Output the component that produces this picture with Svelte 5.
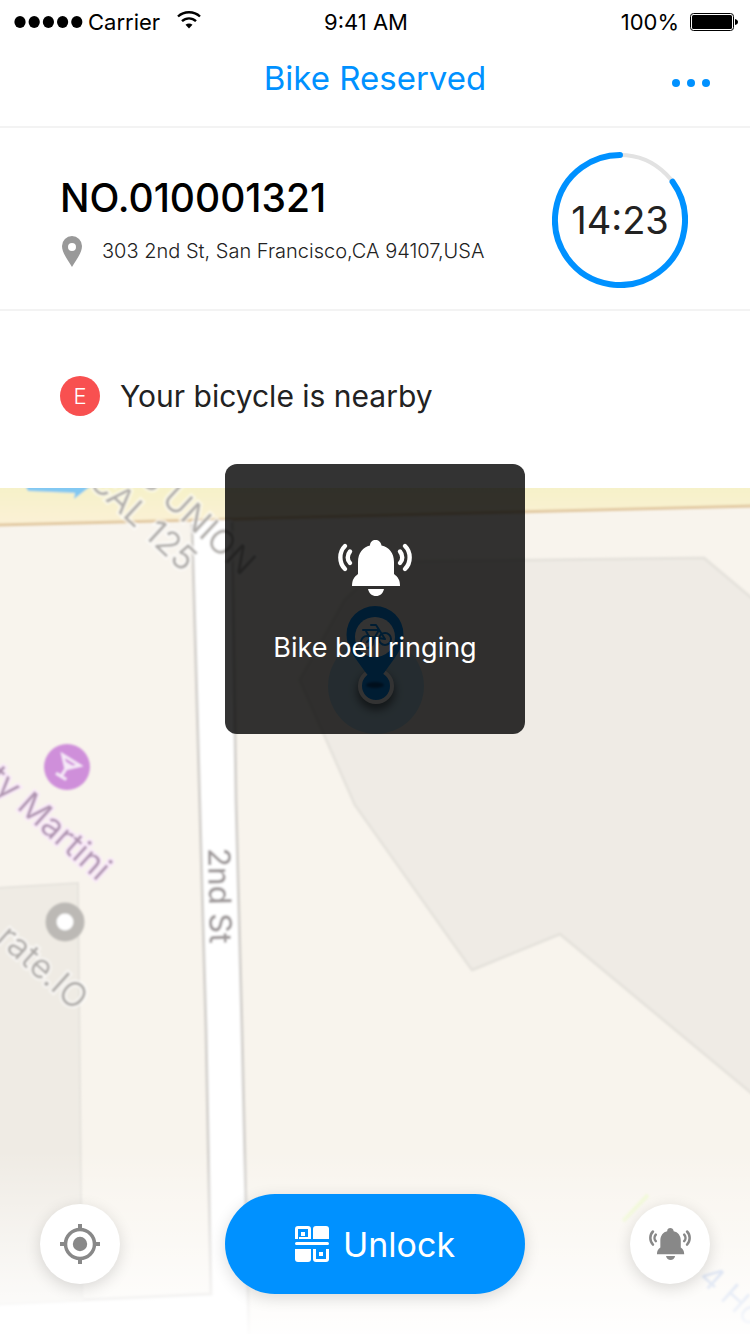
<script>
  const bikeNumber = 'NO.010001321';
  const address = '303 2nd St, San Francisco,CA 94107,USA';
  const timeLeft = '14:23';
  const remaining = 85;
</script>

{#snippet bell()}
  <svg class="bell" viewBox="0 0 74 56" aria-hidden="true">
    <path fill="currentColor" d="M14 46C14 40 16 37 20 34V22C20 13 25 7 32 5.500C32 2 34.500 0 37.500 0S43 2 43.500 5.500C51 7 56 13 56 22V34C60 37 62 40 62 46Z" />
    <path fill="currentColor" d="M30 49H46C45 53.500 42 56 38 56S31 53.500 30 49Z" />
    <g fill="none" stroke="currentColor" stroke-width="4.400" stroke-linecap="round">
      <path d="M7 6C.800 12 .800 23 7 29M12 11.500C9 15 9 20 12 23" />
      <path d="M67 6C73.200 12 73.200 23 67 29M62 11.500C65 15 65 20 62 23" />
    </g>
  </svg>
{/snippet}

<div class="screen">
  <div class="statusbar">
    <div class="carrier">
      <svg width="69" height="14" viewBox="0 0 69 14" aria-hidden="true">
        {#each [0, 1, 2, 3, 4] as i}
          <ellipse cx={6 + i * 14.2} cy="7" rx="5.600" ry="6" />
        {/each}
      </svg>
      <span>Carrier</span>
      <svg class="wifi" width="24" height="18" viewBox="0 0 24 18" aria-hidden="true">
        <g fill="none" stroke="#000" stroke-width="2.400">
          <path d="M1 5.500C7 -.200 17 -.200 23 5.500" />
          <path d="M5 10.200C9 6.400 15 6.400 19 10.200" />
        </g>
        <path d="M8.500 13.800C10.500 12 13.500 12 15.500 13.800L12 17.500Z" />
      </svg>
    </div>
    <span class="clock">9:41 AM</span>
    <div class="power">
      <span>100%</span>
      <svg width="48" height="18" viewBox="0 0 48 18" aria-hidden="true">
        <rect x=".500" y=".500" width="43" height="17" rx="3" fill="none" stroke="#000" />
        <rect x="2" y="2" width="40" height="14" rx="1.500" />
        <path d="M45 6C47 6.500 48 7.500 48 9S47 11.500 45 12Z" />
      </svg>
    </div>
  </div>

  <header>
    <h1>Bike Reserved</h1>
    <button class="more" aria-label="More">
      <i></i><i></i><i></i>
    </button>
  </header>

  <section class="info">
    <div class="details">
      <h2>{bikeNumber}</h2>
      <p class="address">
        <svg width="20" height="31" viewBox="0 0 20 31" aria-hidden="true">
          <path fill="#999" fill-rule="evenodd" d="M10 0A10 10 0 0 1 20 10C20 17 14 24 10 31C6 24 0 17 0 10A10 10 0 0 1 10 0ZM10 7A4 4 0 1 0 10 15A4 4 0 1 0 10 7Z" />
        </svg>
        <span>{address}</span>
      </p>
    </div>
    <div class="timer">
      <svg viewBox="0 0 136 136" aria-hidden="true">
        <circle cx="68" cy="68" r="65" fill="none" stroke="#e2e2e2" stroke-width="4" />
        <circle cx="68" cy="68" r="65" fill="none" stroke="#0091ff" stroke-width="6" stroke-linecap="round" pathLength="100" stroke-dasharray="{remaining} {100 - remaining}" transform="rotate({-90 + (100 - remaining) * 3.6} 68 68)" />
      </svg>
      <span>{timeLeft}</span>
    </div>
  </section>

  <section class="notice">
    <span class="badge">E</span>
    <p>Your bicycle is nearby</p>
  </section>

  <main>
    <svg class="map" viewBox="0 488 750 846" preserveAspectRatio="xMidYMin slice" aria-hidden="true">
      <defs>
        <linearGradient id="fade" x1="0" y1="0" x2="0" y2="1">
          <stop offset="0" stop-color="#fff" stop-opacity="0" />
          <stop offset=".800" stop-color="#fff" stop-opacity=".750" />
          <stop offset="1" stop-color="#fff" stop-opacity=".950" />
        </linearGradient>
        <linearGradient id="avenue" x1="0" y1="0" x2="0" y2="1">
          <stop offset="0" stop-color="#f5f2c6" />
          <stop offset="1" stop-color="#fbf1d6" />
        </linearGradient>
        <filter id="soft" x="-20%" y="-20%" width="140%" height="140%"><feGaussianBlur stdDeviation=".800" /></filter>
        <filter id="shadow" x="-50%" y="-50%" width="200%" height="200%"><feGaussianBlur stdDeviation="4" /></filter>
      </defs>
      <rect y="488" width="750" height="846" fill="#f8f4ed" />
      <g filter="url(#soft)">
        <path d="M-5 480H755V506L-5 525Z" fill="url(#avenue)" />
        <path d="M-5 525L755 506" fill="none" stroke="#e2c9a2" stroke-width="3" />
        <path d="M192 521L232 520L236 800L242 1030L249 1340H-5V1304L211 1294L206 1030L198 740Z" fill="#fff" />
        <path d="M192 524L193 560L198 740L206 1030L211 1294L-5 1304M232 522L236 800L242 1030L249 1340" fill="none" stroke="#d6d3cf" stroke-width="3" />
        <path d="M-5 888L78 883L82 1300L-5 1304Z" fill="#efebe4" stroke="#e6e3dd" stroke-width="2" />
        <path d="M385 562L704 558L755 601V1096L560 934L472 970L355 805L300 680L345 600Z" fill="#efebe5" stroke="#e6e3dd" stroke-width="3" stroke-linejoin="round" />
        <path d="M25 485H92L74 499L75 493L28 491Z" fill="#82c8f2" />
        <g fill="#b1aeab" font-size="34" stroke="#fff" stroke-opacity=".600" stroke-width="4" paint-order="stroke">
          <text text-anchor="end" transform="translate(183 573) rotate(43)">CAL 125</text>
          <text text-anchor="end" transform="translate(242 577) rotate(43)">S UNION</text>
          <text text-anchor="end" transform="translate(75 1012) rotate(42)">rate.IO</text>
        </g>
        <text fill="#a09b9c" font-size="31" font-weight="500" transform="translate(208 848) rotate(89)">2nd St</text>
        <text fill="#af94b0" font-size="34" stroke="#faeafa" stroke-width="4" paint-order="stroke" text-anchor="end" transform="translate(98 882) rotate(42)">ty Martini</text>
        <circle cx="67" cy="767" r="23" fill="#cf8fda" />
        <g transform="translate(67 767) rotate(32)" fill="none" stroke="#f6e9f8" stroke-width="3">
          <path d="M-10 -8H10L0 2ZM0 2V11M-6 11H6" />
          <path d="M-6 -4H6L0 2Z" fill="#f6e9f8" stroke="none" />
        </g>
        <circle cx="65" cy="922" r="14" fill="#fff" stroke="#bcb9b5" stroke-width="11" />
        <path d="M623 1221L648 1195" stroke="#eef7cf" stroke-width="4" />
        <text fill="#a9bce0" font-size="32" transform="translate(697 1279) rotate(42)">4 Ho</text>
      </g>
      <circle cx="376" cy="686" r="48" fill="#b9dced" />
      <circle cx="376" cy="691" r="19" fill="#000" opacity=".500" filter="url(#shadow)" />
      <circle cx="376" cy="686" r="16" fill="#0091ff" stroke="#fff" stroke-width="4" />
      <path d="M375 606A28.500 28.500 0 0 1 403.500 634.500C403.500 648 396 656 384 673Q375 685 366 673C354 656 346.500 648 346.500 634.500A28.500 28.500 0 0 1 375 606Z" fill="#0091ff" />
      <ellipse cx="375" cy="685" rx="9" ry="3" fill="#004a8c" filter="url(#soft)" />
      <circle cx="375" cy="637" r="20" fill="#fff" />
      <g fill="none" stroke="#0091ff" stroke-width="2" stroke-linecap="round" stroke-linejoin="round">
        <circle cx="367" cy="642" r="6" /><circle cx="385" cy="639" r="6" />
        <path d="M367 642L372 637L385 639L376 625H371M363 630H369M366 631L372 642L379 630H366" />
      </g>
      <rect y="1150" width="750" height="184" fill="url(#fade)" />
    </svg>

    <div class="toast" role="status">
      {@render bell()}
      <p>Bike bell ringing</p>
    </div>

    <div class="controls">
      <button class="round" aria-label="Locate me">
        <svg width="40" height="40" viewBox="0 0 40 40" aria-hidden="true">
          <circle cx="20" cy="20" r="14.500" fill="none" stroke="#888" stroke-width="3.500" />
          <circle cx="20" cy="20" r="7.200" fill="#888" />
          <path d="M20 0V5M20 35V40M0 20H5M35 20H40" stroke="#888" stroke-width="4" />
        </svg>
      </button>
      <button class="unlock">
        <svg width="34" height="36" viewBox="0 0 34 36" aria-hidden="true">
          <g fill="#fff">
            <path fill-rule="evenodd" d="M3 0H13Q16 0 16 3V13H0V3Q0 0 3 0ZM3 3V13H4V11H3ZM3 3V11H13V3Z" />
            <rect x="6" y="6" width="4" height="4" />
            <path d="M21 0H31Q34 0 34 3V13H18V3Q18 0 21 0Z" />
            <rect y="16" width="34" height="3" rx="1.500" />
            <path d="M0 23H16V33Q16 36 13 36H3Q0 36 0 33Z" />
            <path d="M18 23H21V33H31V23H34V33Q34 36 31 36H21Q18 36 18 33Z" />
            <rect x="24" y="26" width="4" height="4" />
          </g>
        </svg>
        <span>Unlock</span>
      </button>
      <button class="round" aria-label="Ring bike bell">{@render bell()}</button>
    </div>
  </main>
</div>

<style>
  .screen {
    display: flex;
    flex-direction: column;
    min-height: 100vh;
    background: #fff;
    color: #222;
    font-family: Inter, "Liberation Sans", sans-serif;
  }
  h1, h2, p { margin: 0; font-weight: 400; }
  svg { display: block; flex: none; }
  button {
    padding: 0;
    border: 0;
    background: none;
    font: inherit;
    cursor: pointer;
  }
  .statusbar {
    display: grid;
    grid-template-columns: 1fr auto 1fr;
    align-items: center;
    height: 44px;
    padding: 0 12px 0 14px;
    color: #000;
    font-size: 22px;
  }
  .clock { padding-right: 20px; }
  .carrier, .power { display: flex; align-items: center; }
  .carrier { gap: 5px; }
  .wifi { margin: -4px 0 0 12px; }
  .power { justify-content: flex-end; gap: 11px; }
  header {
    display: grid;
    grid-template-columns: 1fr auto 1fr;
    align-items: center;
    height: 82px;
    padding: 0 40px;
    border-bottom: 2px solid #f3f3f3;
  }
  h1 {
    grid-column: 2;
    padding-bottom: 14px;
    color: #0091ff;
    font-size: 33px;
    line-height: 40px;
  }
  .more { justify-self: end; display: flex; gap: 7px; padding-bottom: 4px; }
  .more i { width: 8px; height: 8px; border-radius: 50%; background: #0091ff; }
  .info {
    display: flex;
    align-items: center;
    justify-content: space-between;
    padding: 24px 62px 21px 60px;
    border-bottom: 2px solid #f3f3f3;
  }
  h2 { color: #000; font-size: 39px; font-weight: 500; line-height: 48px; }
  .address {
    display: flex;
    align-items: center;
    gap: 20px;
    margin-top: 14px;
    padding-left: 2px;
    font-size: 20px;
    font-weight: 300;
    line-height: 31px;
  }
  .timer { display: grid; place-items: center; }
  .timer > * { grid-area: 1 / 1; }
  .timer svg { width: 136px; height: 136px; }
  .timer span { font-size: 38px; }
  .notice {
    display: flex;
    align-items: center;
    gap: 20px;
    padding: 65px 60px 72px;
    font-size: 30px;
    line-height: 40px;
  }
  .badge {
    width: 40px;
    height: 40px;
    border-radius: 50%;
    background: #f85050;
    color: #fff;
    font-size: 22px;
    font-weight: 300;
    text-align: center;
  }
  main {
    position: relative;
    display: flex;
    flex: 1;
    flex-direction: column;
    justify-content: flex-end;
    min-height: 420px;
  }
  .map { position: absolute; inset: 0; width: 100%; height: 100%; }
  .toast {
    position: absolute;
    top: -24px;
    left: 50%;
    display: flex;
    flex-direction: column;
    align-items: center;
    gap: 34px;
    width: 300px;
    padding: 76px 0 68px;
    border-radius: 12px;
    background: rgb(0 0 0 / 80%);
    color: #fff;
    font-size: 27px;
    line-height: 36px;
    box-sizing: border-box;
    transform: translateX(-50%);
  }
  .bell { width: 74px; height: 56px; }
  .controls {
    position: relative;
    display: flex;
    align-items: center;
    justify-content: space-between;
    padding: 0 40px 40px;
  }
  .round {
    display: grid;
    place-items: center;
    width: 80px;
    height: 80px;
    border-radius: 50%;
    background: #fff;
    color: #888;
    box-shadow: 0 4px 16px rgb(0 0 0 / 14%);
  }
  .round .bell { width: 42px; height: 32px; }
  .unlock {
    display: flex;
    align-items: center;
    justify-content: center;
    gap: 14px;
    width: 300px;
    height: 100px;
    border-radius: 50px;
    background: #0091ff;
    color: #fff;
    font-size: 34px;
    box-shadow: 0 4px 16px rgb(0 0 0 / 14%);
  }
</style>
